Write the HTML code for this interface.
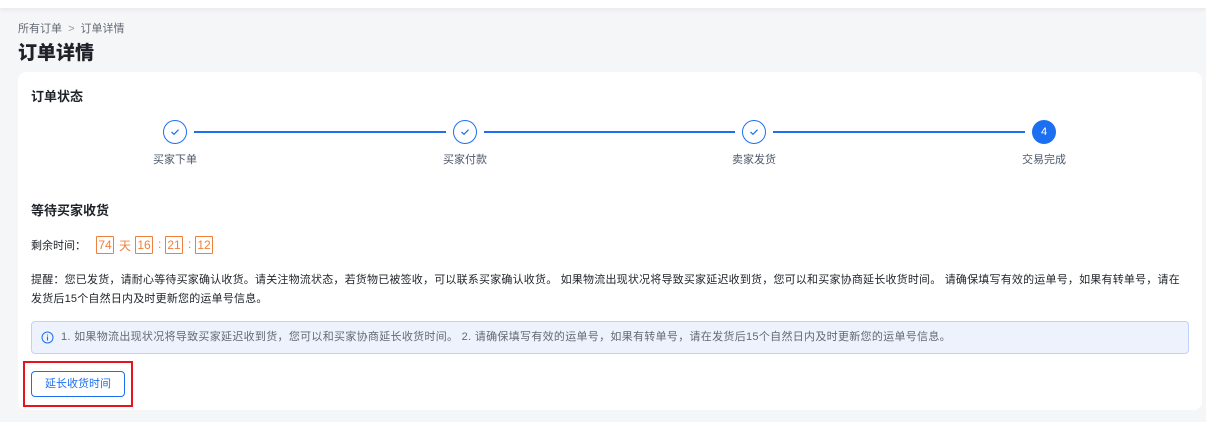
<!DOCTYPE html>
<html><head><meta charset="utf-8"><style>
*{margin:0;padding:0;box-sizing:border-box}
body{width:1206px;height:422px;background:#f5f6f8;font-family:"Liberation Sans","Noto Sans CJK SC",sans-serif;position:relative;overflow:hidden;color:#1f2329}
.abs{position:absolute}
.top{left:0;top:0;width:1206px;height:8px;background:#fff;box-shadow:0 2px 4px rgba(0,0,0,.06)}
.card{left:18px;top:72px;width:1184px;height:338px;background:#fff;border-radius:8px}
.c{width:24px;height:24px;border-radius:50%;border:1.5px solid #1d6ff2;background:#fff;display:flex;align-items:center;justify-content:center}
.ln{height:1.5px;background:#1d6ff2;top:131px}
.lb{font-size:11px;color:#4e5969;top:151px;width:80px;text-align:center}
.bx{top:236px;height:18px;width:18px;border:1px solid #f07f3a;color:#f07f3a;font-size:12px;text-align:center;line-height:16px;border-radius:1px}
.or{top:237px;color:#f07f3a;font-size:12px}
</style></head><body>
<div class="abs top"></div>
<div class="abs" style="left:18px;top:20px;font-size:11px;color:#646a73">所有订单 <span style="margin:0 3px;color:#999">&gt;</span> 订单详情</div>
<div class="abs" style="left:18px;top:38px;font-size:19px;font-weight:900;color:#1f2329">订单详情</div>
<div class="abs card"></div>
<div class="abs" style="left:31px;top:86px;font-size:13px;font-weight:bold">订单状态</div>

<div class="abs ln" style="left:194px;width:252px"></div>
<div class="abs ln" style="left:484px;width:251px"></div>
<div class="abs ln" style="left:773px;width:252px"></div>
<div class="abs c" style="left:163px;top:120px"><svg width="10" height="8" viewBox="0 0 10 8"><path d="M1.5 4l2.5 2.3L8.5 1.7" fill="none" stroke="#1d6ff2" stroke-width="1.2"/></svg></div>
<div class="abs c" style="left:453px;top:120px"><svg width="10" height="8" viewBox="0 0 10 8"><path d="M1.5 4l2.5 2.3L8.5 1.7" fill="none" stroke="#1d6ff2" stroke-width="1.2"/></svg></div>
<div class="abs c" style="left:742px;top:120px"><svg width="10" height="8" viewBox="0 0 10 8"><path d="M1.5 4l2.5 2.3L8.5 1.7" fill="none" stroke="#1d6ff2" stroke-width="1.2"/></svg></div>
<div class="abs c" style="left:1032px;top:120px;background:#1d6ff2;color:#fff;font-size:11px">4</div>
<div class="abs lb" style="left:135px">买家下单</div>
<div class="abs lb" style="left:425px">买家付款</div>
<div class="abs lb" style="left:714px">卖家发货</div>
<div class="abs lb" style="left:1004px">交易完成</div>

<div class="abs" style="left:31px;top:200px;font-size:13px;font-weight:bold">等待买家收货</div>
<div class="abs" style="left:31px;top:237px;font-size:11px;color:#1f2329">剩余时间：</div>
<div class="abs bx" style="left:96px">74</div>
<div class="abs or" style="left:119px">天</div>
<div class="abs bx" style="left:135px">16</div>
<div class="abs or" style="left:158px">:</div>
<div class="abs bx" style="left:165px">21</div>
<div class="abs or" style="left:188px">:</div>
<div class="abs bx" style="left:195px">12</div>

<div class="abs" style="left:31px;top:271px;width:1165px;font-size:11px;line-height:19px;letter-spacing:0.2px;color:#1f2329">提醒：您已发货，请耐心等待买家确认收货。请关注物流状态，若货物已被签收，可以联系买家确认收货。 如果物流出现状况将导致买家延迟收到货，您可以和买家协商延长收货时间。 请确保填写有效的运单号，如果有转单号，请在<br>发货后15个自然日内及时更新您的运单号信息。</div>

<div class="abs" style="left:31px;top:321px;width:1158px;height:33px;background:#edf2fd;border:1px solid #bcd3fb;border-radius:4px;font-size:11px;color:#646a73;line-height:31px;padding-left:29px;letter-spacing:0.3px">1. 如果物流出现状况将导致买家延迟收到货，您可以和买家协商延长收货时间。 2. 请确保填写有效的运单号，如果有转单号，请在发货后15个自然日内及时更新您的运单号信息。</div>
<svg class="abs" style="left:41px;top:331px" width="13" height="13" viewBox="0 0 13 13"><circle cx="6.5" cy="6.5" r="5.5" fill="none" stroke="#1d6ff2" stroke-width="1"/><path d="M6.5 5.5v4M6.5 3.5v1" stroke="#1d6ff2" stroke-width="1.1"/></svg>

<div class="abs" style="left:23px;top:361px;width:110px;height:46px;border:2px solid #e8141b"></div>
<div class="abs" style="left:31px;top:371px;width:94px;height:26px;border:1px solid #1d6ff2;border-radius:4px;color:#1d6ff2;font-size:11px;text-align:center;line-height:24px;background:#fff">延长收货时间</div>
</body></html>
